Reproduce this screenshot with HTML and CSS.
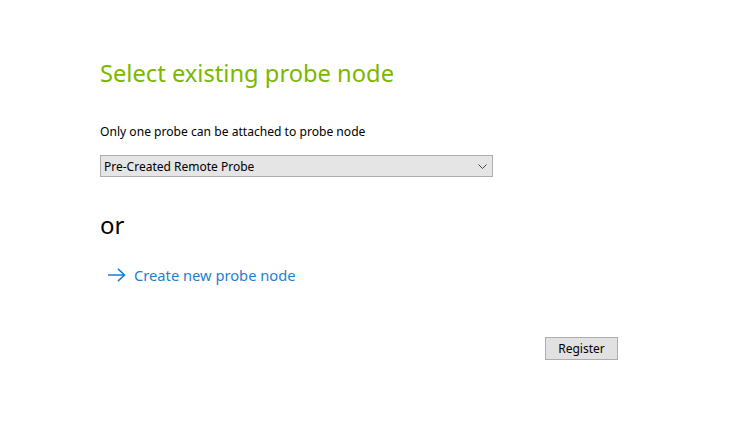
FILE: index.html
```html
<!DOCTYPE html>
<html>
<head>
<meta charset="utf-8">
<link rel="stylesheet" href="styles.css">
</head>
<body>
<div class="page">
  <h1 class="title">Select existing probe node</h1>
  <p class="label">Only one probe can be attached to probe node</p>
  <div class="select">
    <span class="select-text">Pre-Created Remote Probe</span>
    <svg class="chev" width="9" height="5" viewBox="0 0 9 5"><path d="M0.5 0.5 L4.5 4.5 L8.5 0.5" fill="none" stroke="#444" stroke-width="1"/></svg>
  </div>
  <div class="or">or</div>
  <a class="link" href="#">
    <svg class="arrow" width="19" height="14" viewBox="0 0 19 14"><path d="M1 7 H17.5 M11 0.8 L17.5 7 L11 13.2" fill="none" stroke="#1a7fd8" stroke-width="1.6"/></svg>
    <span>Create new probe node</span>
  </a>
  <div class="actions">
    <button class="btn">Register</button>
  </div>
</div>
</body>
</html>
```
FILE: styles.css
```css
html, body {
  margin: 0;
  padding: 0;
  background: #fff;
}
.page {
  width: 735px;
  height: 435px;
  padding: 56px 0 0 100px;
  box-sizing: border-box;
  font-family: "Noto Sans", "Open Sans", sans-serif;
}
.title {
  margin: 0;
  font-weight: 400;
  font-size: 23.7px;
  line-height: 34px;
  color: #7ab800;
}
.label {
  margin: 34px 0 0 0;
  font-size: 12.1px;
  line-height: 16px;
  color: #000;
}
.select {
  margin-top: 15px;
  width: 393px;
  height: 22px;
  box-sizing: border-box;
  border: 1px solid #adadad;
  background: #e5e5e5;
  display: flex;
  align-items: center;
  justify-content: space-between;
  padding: 0 5px 0 3px;
}
.select-text {
  font-size: 12px;
  color: #000;
}
.chev {
  display: block;
}
.or {
  margin-top: 33px;
  font-size: 24px;
  line-height: 30px;
  color: #000;
}
.link {
  margin: 25px 0 0 7px;
  display: flex;
  align-items: center;
  gap: 8px;
  text-decoration: none;
  color: #1a7fd8;
  font-size: 14.7px;
  line-height: 20px;
}
.arrow {
  display: block;
}
.actions {
  margin-top: 52px;
  width: 518px;
  display: flex;
  justify-content: flex-end;
}
.btn {
  width: 73px;
  height: 23px;
  box-sizing: border-box;
  border: 1px solid #adadad;
  background: #e1e1e1;
  font-family: "Noto Sans", sans-serif;
  font-size: 12px;
  color: #000;
  padding: 0;
}
```
